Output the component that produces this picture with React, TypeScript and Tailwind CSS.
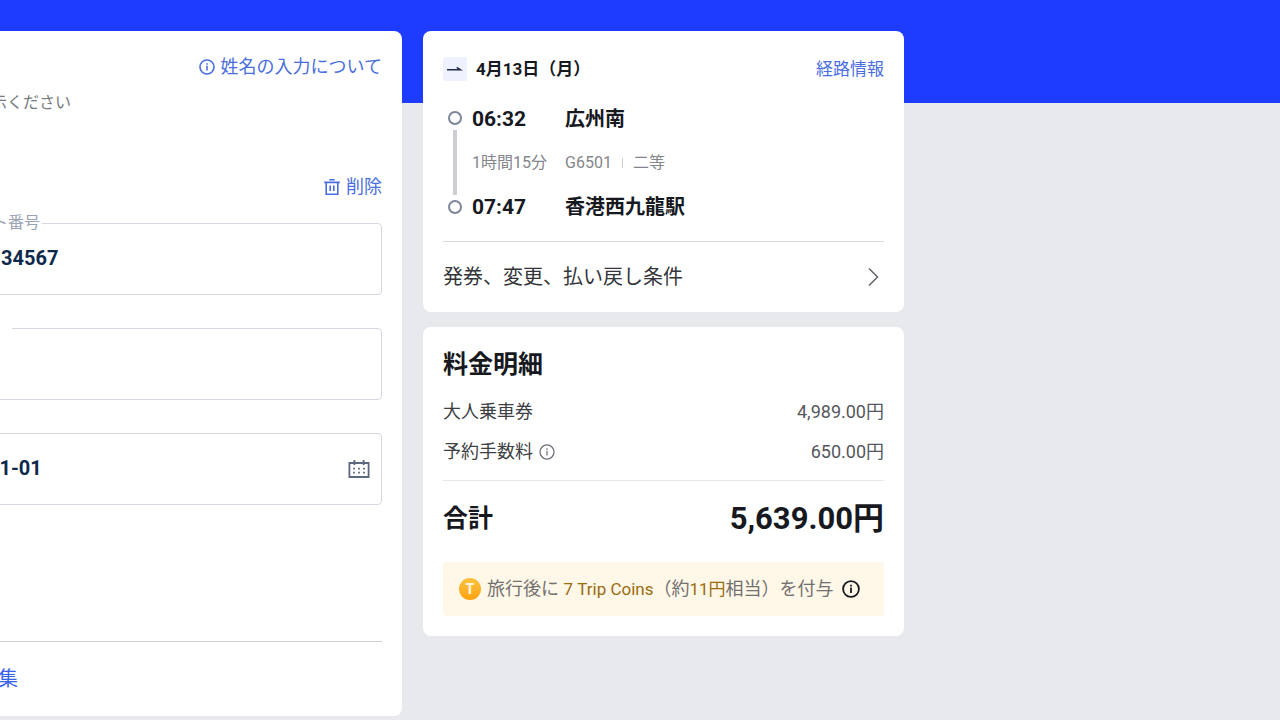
import { useState } from "react";

type IconProps = { className?: string; strokeWidth?: number };

const InfoIcon = ({ className, strokeWidth = 1.8 }: IconProps) => (
  <svg viewBox="0 0 18 18" className={className} fill="none" stroke="currentColor" strokeWidth={strokeWidth} aria-hidden="true">
    <circle cx="9" cy="9" r="7.9" />
    <path d="M9 7.6v5.4M9 4.8v1.7" />
  </svg>
);

const TrashIcon = ({ className }: IconProps) => (
  <svg viewBox="0 0 16 18" className={className} fill="none" stroke="currentColor" strokeWidth="1.6" aria-hidden="true">
    <path d="M5.3 1.8h5.4M.2 4.4h15.6M2.2 4.4v11.8h11.6V4.4M6.2 7.4v5.6M9.8 7.4v5.6" />
  </svg>
);

const CalendarIcon = ({ className }: IconProps) => (
  <svg viewBox="0 0 22 20" className={className} fill="none" stroke="currentColor" aria-hidden="true">
    <path strokeWidth="1.8" d="M1.4 4h19.2v14H1.4zM6.4 1v5M15.6 1v5" />
    <path strokeWidth="1.8" strokeDasharray="1.8 3.2" d="M5.1 9.6h12M5.1 13.6h12" />
  </svg>
);

const OneWayIcon = ({ className }: IconProps) => (
  <svg viewBox="0 0 24 24" className={className} fill="none" stroke="currentColor" strokeWidth="1.4" aria-hidden="true">
    <path d="M4 12.8h13.5l-3.8-2.4" />
  </svg>
);

const ChevronIcon = ({ className }: IconProps) => (
  <svg viewBox="0 0 12 20" className={className} fill="none" stroke="currentColor" strokeWidth="1.6" aria-hidden="true">
    <path d="M1 1.5 9.5 10 1 18.5" />
  </svg>
);

const fees = [
  { label: "大人乗車券", price: "4,989.00円", info: false },
  { label: "予約手数料", price: "650.00円", info: true },
];

const inputClass =
  "h-[72px] w-full rounded-[4px] border border-[#d5d8e0] bg-white px-5 pb-0.5 text-xl font-bold text-[#0f294d] outline-none focus:border-[#3264ff]";

const PassengerCard = () => {
  const [passport, setPassport] = useState("34567");
  const [expiry, setExpiry] = useState("");
  const [birthday, setBirthday] = useState("01-01");

  return (
    <section className="min-w-0 flex-1 rounded-lg bg-white px-5 pt-6">
      <div className="flex h-6 justify-end">
        <a href="#name-guide" className="flex items-center gap-1.5 text-lg leading-6 text-[#4a6ee0]">
          <InfoIcon className="size-4" />
          姓名の入力について
        </a>
      </div>
      <p className="mt-3 pl-[11px] text-base text-[#777a80]">示ください</p>

      <div className="mt-[60px] flex h-6 justify-end">
        <button type="button" className="flex cursor-pointer items-center gap-1.5 text-lg leading-6 text-[#4a6ee0]">
          <TrashIcon className="w-4" />
          削除
        </button>
      </div>

      <div className="relative mt-6">
        <label htmlFor="passport" className="absolute -top-3 left-2.5 bg-white px-0.5 text-base text-[#9aa3b5]">
          ト番号
        </label>
        <input id="passport" className={inputClass} value={passport} onChange={(e) => setPassport(e.target.value)} />
      </div>
      <div className="relative mt-[33px]">
        <span className="absolute top-0 left-2.5 h-px w-[22px] bg-white" />
        <input aria-label="有効期限" className={inputClass} value={expiry} onChange={(e) => setExpiry(e.target.value)} />
      </div>
      <div className="relative mt-[33px]">
        <input aria-label="生年月日" className={`${inputClass} pl-[7px]`} value={birthday} onChange={(e) => setBirthday(e.target.value)} />
        <CalendarIcon className="pointer-events-none absolute top-[26px] right-3 w-[22px] text-[#5d6780]" />
      </div>

      <div className="mt-[136px] flex h-[75px] items-center border-t border-[#cfd1d6] pl-[18px]">
        <a href="#edit" className="text-xl text-[#3b62ea]">集</a>
      </div>
    </section>
  );
};

const TripCard = () => (
  <section className="rounded-lg bg-white px-5 pt-[26px]">
    <div className="flex h-6 items-center justify-between">
      <div className="flex items-center gap-[9px]">
        <span className="rounded-xs bg-[#eef1ff]">
          <OneWayIcon className="size-6 text-[#1f2a4d]" />
        </span>
        <h2 className="pt-0.5 text-[17px] font-bold text-[#17191f]">4月13日（月）</h2>
      </div>
      <a href="#route" className="pt-0.5 text-[17px] text-[#4a6ee0]">経路情報</a>
    </div>

    <div className="mt-[22px] flex gap-[5px]">
      <div className="flex w-6 flex-col items-center gap-[5px] pt-2 pb-[7px]">
        <span className="size-3.5 rounded-full border-2 border-[#7c8599]" />
        <span className="w-1 flex-1 bg-[#cdced3]" />
        <span className="size-3.5 rounded-full border-2 border-[#7c8599]" />
      </div>
      <div className="grid grid-cols-[93px_1fr] gap-y-3.5 leading-8 text-[#17191f]">
        <time className="h-[30px] text-[21px] font-bold">06:32</time>
        <span className="h-[30px] text-xl leading-8 font-bold">広州南</span>
        <span className="h-[30px] text-base leading-8 text-[#84868c]">1時間15分</span>
        <span className="flex h-8 items-center gap-2.5 text-base text-[#84868c] -mb-0.5">
          G6501
          <span className="h-2.5 w-px bg-[#cdced3]" />
          二等
        </span>
        <time className="h-[30px] text-[21px] font-bold">07:47</time>
        <span className="h-[30px] text-xl leading-8 font-bold">香港西九龍駅</span>
      </div>
    </div>

    <button
      type="button"
      className="mt-5 flex h-[71px] w-full cursor-pointer items-center justify-between border-t border-[#d7d8dc] pr-1 text-xl text-[#33353a]"
    >
      発券、変更、払い戻し条件
      <ChevronIcon className="w-3 text-[#66686e]" />
    </button>
  </section>
);

const PriceCard = () => (
  <section className="rounded-lg bg-white px-5 pt-[18px] pb-5">
    <h2 className="text-[25px] leading-10 font-bold text-[#17191f]">料金明細</h2>
    <dl className="mt-[7px]">
      {fees.map((fee) => (
        <div key={fee.label} className="flex h-10 items-center justify-between text-lg">
          <dt className="flex items-center gap-1.5 text-[#3d3f45]">
            {fee.label}
            {fee.info && <InfoIcon className="size-4 text-[#6b6e78]" strokeWidth={1.4} />}
          </dt>
          <dd className="text-[#55575d]">{fee.price}</dd>
        </div>
      ))}
    </dl>
    <div className="mt-2 flex h-[75px] items-center justify-between border-t border-[#e6e7ea] pt-0.5 font-bold text-[#17191f]">
      <span className="text-[25px]">合計</span>
      <span className="text-[31px]">5,639.00円</span>
    </div>
    <div className="mt-[7px] flex h-[54px] items-center rounded-[4px] bg-[#fff7e8] px-4 text-lg text-[#73716f]">
      <span className="mr-1.5 flex size-[22px] items-center justify-center rounded-full bg-linear-to-b from-[#fbc33b] to-[#ffa10a] text-sm font-black text-[#fff3da]">
        T
      </span>
      <p>
        旅行後に <span className="text-[17px] text-[#9a6c0c]">7 Trip Coins</span>（約
        <span className="text-[17px] text-[#9a6c0c]">11円</span>相当）を付与
      </p>
      <button type="button" aria-label="Trip Coins" className="ml-2 cursor-pointer text-[#17191f]">
        <InfoIcon className="size-[18px]" />
      </button>
    </div>
  </section>
);

const App = () => {
  return (
    <div className="min-h-screen overflow-hidden bg-[#e8e9ed] font-[Roboto,'Noto_Sans_CJK_JP',sans-serif]" lang="ja">
      <header className="h-[103px] bg-[#1e3cff]" />
      <main className="relative -mt-[72px] -ml-10 flex items-start gap-[21px] pr-[376px]">
        <PassengerCard />
        <aside className="flex w-[481px] shrink-0 flex-col gap-[15px]">
          <TripCard />
          <PriceCard />
        </aside>
      </main>
    </div>
  );
};

export default App;
